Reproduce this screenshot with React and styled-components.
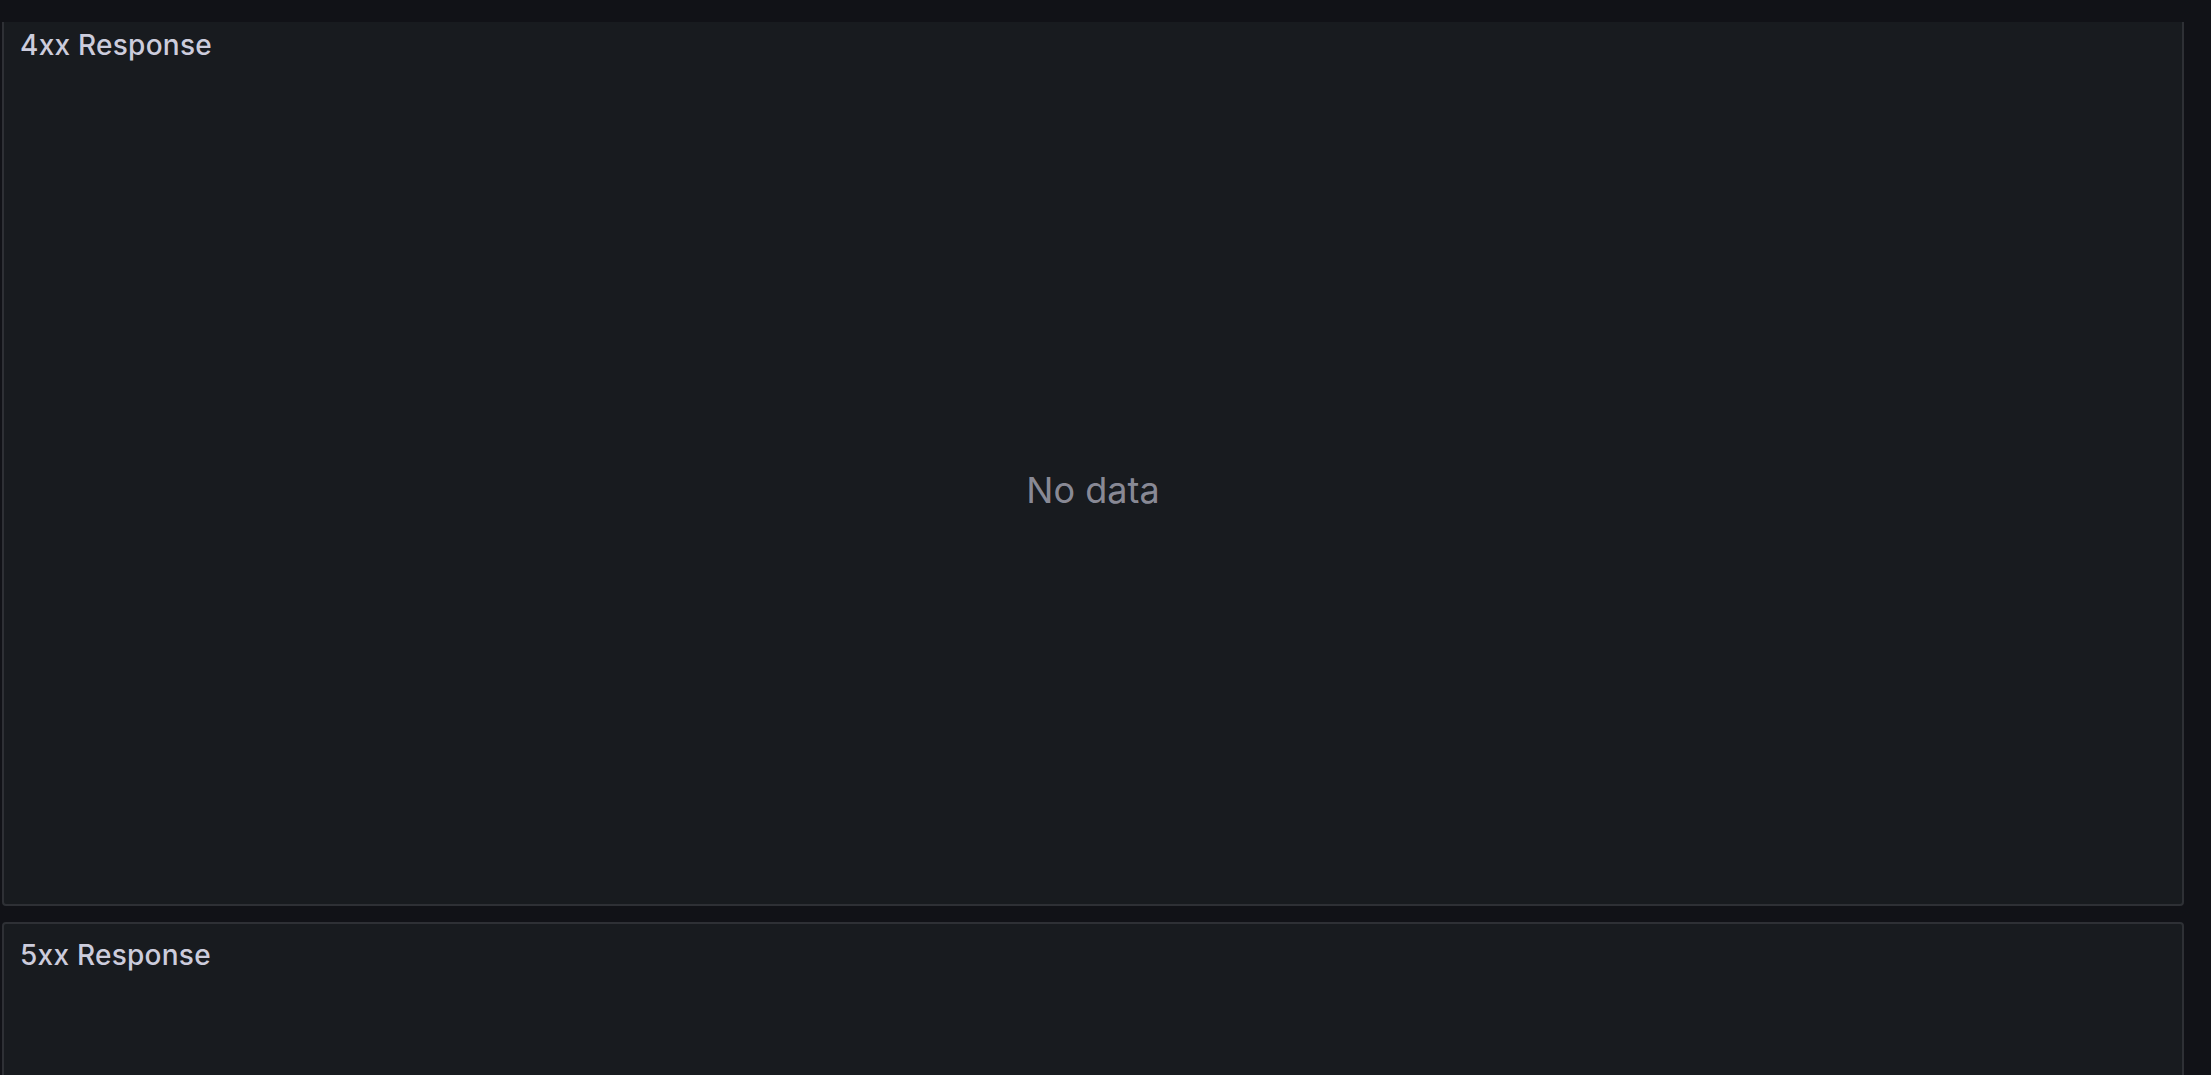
import styled, { createGlobalStyle } from 'styled-components';

// --- Global page reset ---
const GlobalStyle = createGlobalStyle`
  html, body, #root {
    margin: 0;
    padding: 0;
    height: 100%;
  }
  body {
    background: #111217;
    font-family: Inter, "Noto Sans", "Liberation Sans", sans-serif;
    overflow: hidden;
  }
`;

const Page = styled.div`
  display: flex;
  flex-direction: column;
  height: 100vh;
  background: #111217;
`;

const TopBar = styled.header`
  height: 22px;
  flex: none;
  background: #111217;
  position: relative;
  z-index: 2;
`;

// the dashboard is scrolled a little, so the first panel's top is under the bar
const Viewport = styled.main`
  flex: 1;
  overflow: hidden;
  padding: 0 27px 0 2px;
`;

const PanelStack = styled.div`
  display: flex;
  flex-direction: column;
  gap: 16px;
  margin-top: -10px;
`;

const Panel = styled.section`
  display: flex;
  flex-direction: column;
  height: ${p => p.$height}px;
  background: #181b1f;
  border: 2px solid #2e3035;
  border-radius: 4px;
  box-sizing: border-box;
`;

const PanelHeader = styled.div`
  height: 61px;
  flex: none;
  display: flex;
  align-items: center;
  padding: 0 16px;
`;

const PanelTitle = styled.h2`
  margin: 0;
  font-size: 28px;
  font-weight: 500;
  color: #ccccdc;
  letter-spacing: 0.25px;
`;

const PanelBody = styled.div`
  flex: 1;
  display: flex;
  align-items: center;
  justify-content: center;
`;

const NoData = styled.div`
  font-size: 36px;
  font-weight: 400;
  color: rgba(204, 204, 220, 0.65);
`;

// second panel's message sits below the fold, so it isn't drawn here
const panels = [
  { title: '4xx Response', height: 894, empty: true },
  { title: '5xx Response', height: 894, empty: false },
];

export default function App() {
  return (
    <>
      <GlobalStyle />
      <Page>
        <TopBar />
        <Viewport>
          <PanelStack>
            {panels.map(p => (
              <Panel key={p.title} $height={p.height}>
                <PanelHeader>
                  <PanelTitle>{p.title}</PanelTitle>
                </PanelHeader>
                <PanelBody>{p.empty && <NoData>No data</NoData>}</PanelBody>
              </Panel>
            ))}
          </PanelStack>
        </Viewport>
      </Page>
    </>
  );
}
